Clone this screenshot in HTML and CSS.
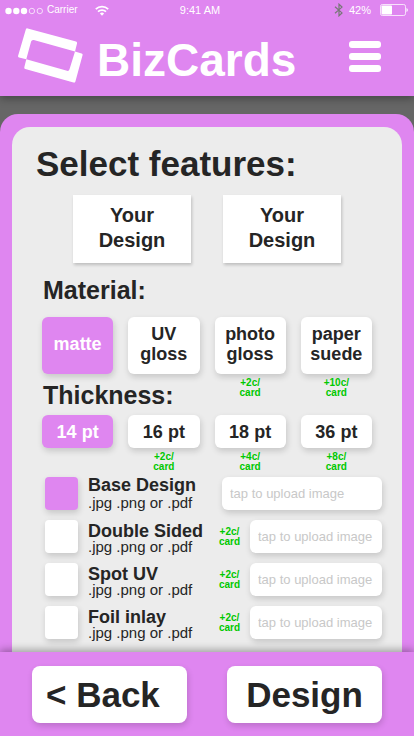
FILE: index.html
```html
<!DOCTYPE html>
<html lang="en">
<head>
<meta charset="utf-8">
<meta name="viewport" content="width=device-width, initial-scale=1">
<title>BizCards</title>
<link rel="stylesheet" href="styles.css">
</head>
<body>
<header class="header">
  <div class="status">
    <div class="status-left">
      <svg width="40" height="8" viewBox="0 0 40 8" aria-hidden="true">
        <g fill="#fff"><circle cx="4.5" cy="4" r="3.2"/><circle cx="12.3" cy="4" r="3.2"/><circle cx="20" cy="4" r="3.2"/></g>
        <g fill="none" stroke="#fff" stroke-width=".7"><circle cx="27.9" cy="4" r="2.7"/><circle cx="35.8" cy="4" r="2.7"/></g>
      </svg>
      <span class="carrier">Carrier</span>
      <svg class="wifi" width="14" height="11" viewBox="0 0 14 11" aria-hidden="true">
        <g fill="none" stroke="#fff" stroke-width="1.7"><path d="M.8 4.2a8.8 8.8 0 0 1 12.4 0"/><path d="M3 6.7a5.7 5.7 0 0 1 8 0"/></g>
        <path fill="#fff" d="M4.9 8.6a3 3 0 0 1 4.2 0L7 10.8z"/>
      </svg>
    </div>
    <span class="clock">9:41 AM</span>
    <div class="status-right">
      <svg width="10" height="14" viewBox="0 0 10 14" aria-hidden="true"><path d="M1 3.7l7 6.2L5 12.8V1.2l3 2.9L1 10.3" fill="none" stroke="#777" stroke-width="1.2"/></svg>
      <span class="percent">42%</span>
      <svg width="28" height="12" viewBox="0 0 28 12" aria-hidden="true"><rect x=".5" y=".5" width="25" height="11" rx="1.8" fill="none" stroke="#fff" stroke-opacity=".75"/><rect x="1.5" y="1.5" width="10.5" height="9" rx=".8" fill="#fff"/><path d="M26.5 4v4q1.3-.7 1.3-2t-1.3-2" fill="#fff"/></svg>
    </div>
  </div>
  <div class="brand">
    <svg width="66" height="56" viewBox="0 0 66 56" aria-hidden="true">
      <path fill="#fff" d="M7.8 1.4Q8.3 0 9.7.4L58 13.6Q59.3 14 59 15.4L57 23.5L15.8 12.1Q13.7 11.6 13.1 13.6L8.3 31.3L1 29.4Q-.2 29 .1 27.7z"/>
      <path fill="#fff" d="M57 23.5L63.6 25.4Q64.9 25.8 64.6 27L57.4 53.4Q57 54.9 55.5 54.5L7.3 41Q6 40.6 6.3 39.2L8.3 31.3L49 42.8Q51 43.3 51.5 41.3z"/>
    </svg>
    <span class="brand-name">BizCards</span>
    <button class="menu" aria-label="Menu"><span></span><span></span><span></span></button>
  </div>
</header>

<main class="main">
  <div class="sheet">
    <form class="panel" id="features">
      <h1>Select features:</h1>
      <div class="previews">
        <div class="preview">Your<br>Design</div>
        <div class="preview">Your<br>Design</div>
      </div>

      <h2 class="material-title">Material:</h2>
      <div class="options material">
        <div class="option"><button type="button" class="tile selected">matte</button></div>
        <div class="option"><button type="button" class="tile">UV<br>gloss</button></div>
        <div class="option"><button type="button" class="tile">photo<br>gloss</button><span class="price">+2c/<br>card</span></div>
        <div class="option"><button type="button" class="tile">paper<br>suede</button><span class="price">+10c/<br>card</span></div>
      </div>

      <h2 class="thickness-title">Thickness:</h2>
      <div class="options thickness">
        <div class="option"><button type="button" class="tile selected">14 pt</button></div>
        <div class="option"><button type="button" class="tile">16 pt</button><span class="price">+2c/<br>card</span></div>
        <div class="option"><button type="button" class="tile">18 pt</button><span class="price">+4c/<br>card</span></div>
        <div class="option"><button type="button" class="tile">36 pt</button><span class="price">+8c/<br>card</span></div>
      </div>

      <div class="uploads">
        <div class="row base">
          <input type="checkbox" id="base" checked>
          <label for="base"><strong>Base Design</strong><span>.jpg .png or .pdf</span></label>
          <input type="text" class="upload" placeholder="tap to upload image" aria-label="Base Design image">
        </div>
        <div class="row">
          <input type="checkbox" id="double">
          <label for="double"><strong>Double Sided</strong><span>.jpg .png or .pdf</span></label>
          <span class="row-price">+2c/<br>card</span>
          <input type="text" class="upload" placeholder="tap to upload image" aria-label="Double Sided image">
        </div>
        <div class="row">
          <input type="checkbox" id="spot">
          <label for="spot"><strong>Spot UV</strong><span>.jpg .png or .pdf</span></label>
          <span class="row-price">+2c/<br>card</span>
          <input type="text" class="upload" placeholder="tap to upload image" aria-label="Spot UV image">
        </div>
        <div class="row">
          <input type="checkbox" id="foil">
          <label for="foil"><strong>Foil inlay</strong><span>.jpg .png or .pdf</span></label>
          <span class="row-price">+2c/<br>card</span>
          <input type="text" class="upload" placeholder="tap to upload image" aria-label="Foil inlay image">
        </div>
      </div>
    </form>
  </div>
</main>

<footer class="footer">
  <button class="nav back">&lt; Back</button>
  <button class="nav">Design</button>
</footer>
</body>
</html>
```
FILE: styles.css
```css
:root {
  --pink: #df86f0;
  --ink: #252525;
  --green: #00c800;
  --shadow: 1px 3px 6px rgba(0, 0, 0, .16);
}

* { box-sizing: border-box; }

body {
  margin: 0;
  min-height: 100vh;
  display: flex;
  flex-direction: column;
  background: #666;
  color: var(--ink);
  font-family: "Liberation Sans", Arial, sans-serif;
}

button, input { font-family: inherit; color: inherit; border: 0; margin: 0; }
h1, h2 { margin: 0; font-weight: bold; }

.header {
  position: relative;
  z-index: 1;
  height: 96px;
  background: var(--pink);
  color: #fff;
  box-shadow: 0 3px 8px rgba(0, 0, 0, .3);
}

.status {
  display: grid;
  grid-template-columns: 1fr auto 1fr;
  align-items: center;
  height: 20px;
  padding: 0 6px 0 4px;
  font-size: 11px;
}
.status-left, .status-right { display: flex; align-items: center; }
.status-left { padding-top: 1px; }
.status-right { justify-content: flex-end; }
.carrier { margin: 0 17px 2px 3px; font-size: 10px; }
.percent { margin: 0 9px 1px 5px; }
.clock { padding-right: 12px; }

.brand {
  display: flex;
  align-items: center;
  padding: 8px 33px 0 18px;
}
.brand svg { flex: none; }
.brand-name {
  flex: 1;
  margin: 7px 0 0 13px;
  font-size: 46px;
  line-height: 48px;
  font-weight: bold;
}
.menu {
  display: flex;
  flex-direction: column;
  gap: 5px;
  width: 32px;
  padding: 0;
  background: none;
}
.menu span { width: 100%; height: 7px; border-radius: 3px; background: #fff; }

.main {
  flex: 1;
  display: flex;
  padding-top: 18px;
}
.sheet {
  flex: 1;
  display: flex;
  padding: 13px 12px 0;
  border-radius: 18px 18px 0 0;
  background: var(--pink);
}
.panel {
  flex: 1;
  padding: 17px 30px 13px;
  border-radius: 18px 18px 0 0;
  background: #ececec;
}

h1 { margin-left: -6px; font-size: 35px; line-height: 40px; white-space: nowrap; }
h2 { margin-left: 1px; font-size: 25px; line-height: 30px; }

.previews {
  display: flex;
  justify-content: center;
  gap: 32px;
  margin-top: 11px;
}
.preview {
  width: 118px;
  padding: 8px 0 10px;
  background: #fff;
  box-shadow: 1px 2px 3px rgba(0, 0, 0, .2);
  font-size: 20px;
  line-height: 25px;
  font-weight: bold;
  text-align: center;
}

.material-title { margin-top: 12px; }
.thickness-title { margin-top: 6px; }

.options {
  display: grid;
  grid-template-columns: repeat(4, 1fr);
  gap: 15px;
}
.material { margin-top: 12px; }
.thickness { margin-top: 5px; }
.option { position: relative; }
.tile {
  display: block;
  width: 100%;
  height: 33px;
  padding: 0;
  border-radius: 6px;
  background: #fff;
  box-shadow: var(--shadow);
  font-size: 18px;
  line-height: 20px;
  font-weight: bold;
}
.material .tile { height: 57px; padding-bottom: 3px; }
.selected { background: var(--pink); color: #fff; }

.price, .row-price {
  color: var(--green);
  font-size: 10px;
  line-height: 10px;
  font-weight: bold;
  text-align: center;
}
.price { position: absolute; top: 100%; left: 0; right: 0; margin-top: 4px; }

.uploads {
  display: flex;
  flex-direction: column;
  gap: 10px;
  margin: 29px -10px 0 3px;
}
.row { display: flex; align-items: center; height: 33px; }
.row input[type="checkbox"] {
  flex: none;
  appearance: none;
  width: 33px;
  height: 33px;
  border-radius: 4px;
  background: #fff;
  box-shadow: var(--shadow);
}
.row input[type="checkbox"]:checked { background: var(--pink); }
.row label {
  flex: 1;
  padding: 4px 0 0 10px;
  white-space: nowrap;
}
.row strong, .row label span { display: block; }
.row strong { font-size: 18px; line-height: 16px; }
.row label span { font-size: 15px; line-height: 16px; }
.base label { padding-top: 0; }
.base strong { line-height: 18px; }
.base label span { line-height: 18px; }
.row-price { margin-right: 10px; }
.upload {
  width: 132px;
  height: 33px;
  padding: 0 8px;
  border-radius: 6px;
  background: #fff;
  box-shadow: var(--shadow);
  font-size: 13px;
}
.base .upload { width: 160px; }
.upload::placeholder { color: #c8c8c8; opacity: 1; }

.footer {
  position: relative;
  display: grid;
  grid-template-columns: 1fr 1fr;
  gap: 40px;
  padding: 14px 32px 13px;
  background: var(--pink);
  box-shadow: 0 -2px 8px rgba(0, 0, 0, .35);
}
.nav {
  height: 57px;
  padding: 0;
  border-radius: 8px;
  background: #fff;
  box-shadow: var(--shadow);
  font-size: 35px;
  font-weight: bold;
}
.back { padding-left: 14px; text-align: left; }
```
